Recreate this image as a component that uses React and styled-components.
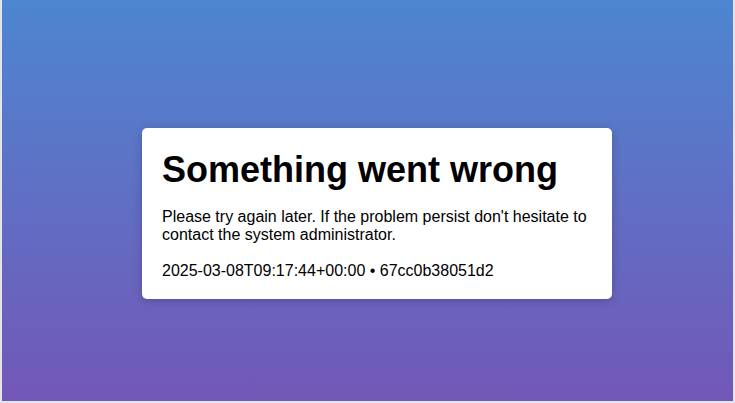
import React from 'react'
import styled, { createGlobalStyle } from 'styled-components'

const GlobalStyle = createGlobalStyle`
  html, body {
    margin: 0;
    padding: 0;
    height: 100%;
  }
  body {
    font-family: "Liberation Sans", Arial, sans-serif;
  }
  #root {
    height: 100%;
  }
`

export default function App() {
  return (
    <>
      <GlobalStyle />
      <Page>
        <Card>
          <Title>Something went wrong</Title>
          <Message>
            Please try again later. If the problem persist don't hesitate to contact the system administrator.
          </Message>
          <Meta>2025-03-08T09:17:44+00:00 • 67cc0b38051d2</Meta>
        </Card>
      </Page>
    </>
  )
}

const Page = styled.div`
  box-sizing: border-box;
  height: 100%;
  display: flex;
  align-items: center;
  justify-content: center;
  padding: 26px 0 0 19px;
  background: linear-gradient(to bottom, #4d86d0, #7357b7);
  border: 2px solid #e4e4ea;
  border-top: none;
`

const Card = styled.div`
  box-sizing: border-box;
  width: 470px;
  padding: 21px 20px 19px;
  background: #fff;
  border-radius: 5px;
  box-shadow: 0 2px 10px rgba(0, 0, 0, 0.2);
  color: #000;
`

const Title = styled.h1`
  margin: 0 0 17px;
  font-size: 36px;
  font-weight: bold;
`

const Message = styled.p`
  margin: 0 0 18px;
  font-size: 16px;
`

const Meta = styled.p`
  margin: 0;
  font-size: 16px;
`
